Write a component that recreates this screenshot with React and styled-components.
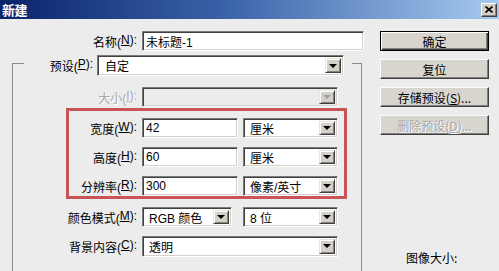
import styled, { createGlobalStyle } from 'styled-components'

const GlobalStyle = createGlobalStyle`
  html, body {
    margin: 0;
    padding: 0;
  }
  body {
    background: #ececec;
    font-family: "Liberation Sans", "Noto Sans CJK SC", sans-serif;
    font-size: 12px;
    color: #000;
  }
`

const Dialog = styled.div`
  width: 499px;
  height: 271px;
  overflow: hidden;
  background: #ececec;
`

const TitleBar = styled.div`
  height: 19px;
  display: flex;
  align-items: center;
  justify-content: space-between;
  padding: 0 2px;
  background: linear-gradient(90deg, #0a246a 0%, #3a62a8 45%, #a6caf0 100%);
  color: #fff;
  font-family: "Noto Sans CJK SC", sans-serif;
  font-weight: bold;
  font-size: 13px;
  letter-spacing: -0.5px;
`

const CloseBtn = styled.div`
  width: 16px;
  height: 14px;
  box-sizing: border-box;
  display: flex;
  align-items: center;
  justify-content: center;
  background: #d4d0c8;
  border: 1px solid;
  border-color: #fff #404040 #404040 #fff;
  box-shadow: inset -1px -1px #808080;
`

const Body = styled.div`
  display: flex;
  padding-top: 12px;
`

const LeftCol = styled.div`
  width: 368px;
`

const RightCol = styled.div`
  margin-left: 12px;
  width: 109px;
  display: flex;
  flex-direction: column;
  gap: 8px;
`

const Row = styled.div`
  display: flex;
  align-items: center;
  height: 20px;
  margin-top: ${(p) => p.$top || 0}px;
`

const Label = styled.span`
  flex-shrink: 0;
  width: ${(p) => p.$w || 68}px;
  margin-right: ${(p) => p.$gap || 5}px;
  display: flex;
  justify-content: flex-end;
  white-space: pre;
  color: ${(p) => (p.$disabled ? '#a6a6a6' : '#000')};
  text-shadow: ${(p) => (p.$disabled ? '1px 1px 0 #fff' : 'none')};
`

const U = styled.span`
  text-decoration: underline;
`

const sunken = `
  box-sizing: border-box;
  border: 1px solid;
  border-color: #7a7a7a #fff #fff #7a7a7a;
  box-shadow: inset 1px 1px #404040, inset -1px -1px #d4d0c8;
`

const TextBox = styled.div`
  ${sunken}
  flex-shrink: 0;
  width: ${(p) => p.$w}px;
  height: ${(p) => p.$h || 20}px;
  background: #fff;
  padding-left: 3px;
  display: flex;
  align-items: center;
  white-space: nowrap;
`

const Combo = styled.div`
  ${sunken}
  flex-shrink: 0;
  width: ${(p) => p.$w}px;
  height: ${(p) => p.$h || 20}px;
  padding: 2px;
  background: ${(p) => (p.$disabled ? '#ececec' : '#fff')};
  display: flex;
  align-items: stretch;
`

const ComboText = styled.div`
  flex: 1;
  padding-left: ${(p) => p.$pad || 4}px;
  display: flex;
  align-items: center;
  white-space: nowrap;
  overflow: hidden;
`

const DropBtn = styled.div`
  width: 16px;
  box-sizing: border-box;
  background: #d4d0c8;
  border: 1px solid;
  border-color: #e8e6e2 #404040 #404040 #e8e6e2;
  box-shadow: inset 1px 1px #fff, inset -1px -1px #808080;
  display: flex;
  align-items: center;
  justify-content: center;

  &::after {
    content: '';
    width: 0;
    height: 0;
    border-left: 4px solid transparent;
    border-right: 4px solid transparent;
    border-top: 4px solid ${(p) => (p.$disabled ? '#a0a0a0' : '#000')};
  }
`

const GroupBox = styled.fieldset`
  margin: 0 0 0 12px;
  width: 350px;
  box-sizing: border-box;
  padding: 0;
  border: 1px solid #8c8c8c;
  border-bottom: none;
  height: 230px;
`

const GroupLegend = styled.legend`
  margin-left: 11px;
  padding: 4px 8px 0 0;
  display: flex;
  align-items: center;
`

const GroupContent = styled.div`
  padding: 11px 0 0 56px;
`

const Highlight = styled.div`
  margin: 1px 0 0 -3px;
  width: 281px;
  box-sizing: border-box;
  border: 3px solid #c75457;
  padding: 7px 0 0 0;
  display: flex;
  flex-direction: column;
  gap: 9px;
  height: 91px;
`

const Button = styled.div`
  height: 20px;
  box-sizing: border-box;
  display: flex;
  align-items: center;
  justify-content: center;
  background: #d8d5cf;
  border: 1px solid;
  border-color: ${(p) => (p.$default ? '#000' : '#fafafa #404040 #404040 #fafafa')};
  box-shadow: ${(p) =>
    p.$default
      ? 'inset 1px 1px #fff, inset -1px -1px #404040, inset -2px -2px #808080'
      : 'inset -1px -1px #808080'};
  color: ${(p) => (p.$disabled ? '#a6a6a6' : '#000')};
  text-shadow: ${(p) => (p.$disabled ? '1px 1px 0 #fff' : 'none')};
  font-family: "Noto Sans CJK SC", sans-serif;
  white-space: nowrap;
`

const SizeInfo = styled.div`
  margin-top: 106px;
  padding-left: 26px;
  font-family: "Noto Sans CJK SC", sans-serif;
`

const Spacer = styled.span`
  flex-shrink: 0;
  display: inline-block;
  width: ${(p) => p.$w}px;
`

export default function App() {
  return (
    <>
      <GlobalStyle />
      <Dialog>
        <TitleBar>
          <span>新建</span>
          <CloseBtn>
            <svg width="8" height="7" viewBox="0 0 8 7">
              <path d="M0.5 0.5 L7.5 6.5 M7.5 0.5 L0.5 6.5" stroke="#000" strokeWidth="1.6" />
            </svg>
          </CloseBtn>
        </TitleBar>
        <Body>
          <LeftCol>
            <Row>
              <Label $w={137}>
                名称(<U>N</U>):
              </Label>
              <TextBox $w={222}>未标题-1</TextBox>
            </Row>
            <GroupBox>
              <GroupLegend>
                <Label $w={69} $gap={4}>
                  预设(<U>P</U>):
                </Label>
                <Combo $w={247} $h={21}>
                  <ComboText $pad={5}>自定</ComboText>
                  <DropBtn />
                </Combo>
              </GroupLegend>
              <GroupContent>
                <Row>
                  <Label $disabled>
                    大小(<U>I</U>):
                  </Label>
                  <Combo $w={196} $disabled>
                    <ComboText />
                    <DropBtn $disabled />
                  </Combo>
                </Row>
                <Highlight>
                  <Row>
                    <Label>
                      宽度(<U>W</U>):
                    </Label>
                    <TextBox $w={96}>42</TextBox>
                    <Spacer $w={5} />
                    <Combo $w={95}>
                      <ComboText>厘米</ComboText>
                      <DropBtn />
                    </Combo>
                  </Row>
                  <Row>
                    <Label>
                      高度(<U>H</U>):
                    </Label>
                    <TextBox $w={96}>60</TextBox>
                    <Spacer $w={5} />
                    <Combo $w={95}>
                      <ComboText>厘米</ComboText>
                      <DropBtn />
                    </Combo>
                  </Row>
                  <Row>
                    <Label>
                      分辨率(<U>R</U>):
                    </Label>
                    <TextBox $w={96}>300</TextBox>
                    <Spacer $w={5} />
                    <Combo $w={95}>
                      <ComboText>像素/英寸</ComboText>
                      <DropBtn />
                    </Combo>
                  </Row>
                </Highlight>
                <Row $top={8}>
                  <Label>
                    颜色模式(<U>M</U>):
                  </Label>
                  <Combo $w={90}>
                    <ComboText>RGB 颜色</ComboText>
                    <DropBtn />
                  </Combo>
                  <Spacer $w={11} />
                  <Combo $w={95}>
                    <ComboText>8 位</ComboText>
                    <DropBtn />
                  </Combo>
                </Row>
                <Row $top={9}>
                  <Label>
                    背景内容(<U>C</U>):
                  </Label>
                  <Combo $w={196} $h={21}>
                    <ComboText>透明</ComboText>
                    <DropBtn />
                  </Combo>
                </Row>
              </GroupContent>
            </GroupBox>
          </LeftCol>
          <RightCol>
            <Button $default>确定</Button>
            <Button>复位</Button>
            <Button>
              存储预设(<U>S</U>)...
            </Button>
            <Button $disabled>
              删除预设(<U>D</U>)...
            </Button>
            <SizeInfo>图像大小:</SizeInfo>
          </RightCol>
        </Body>
      </Dialog>
    </>
  )
}
